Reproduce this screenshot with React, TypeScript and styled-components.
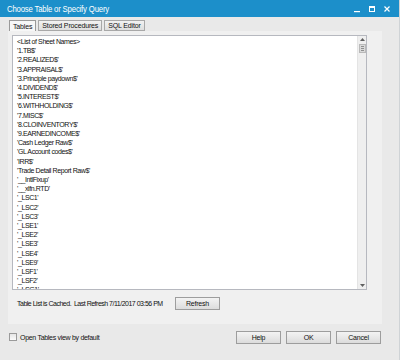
import React from 'react';
import styled, { createGlobalStyle } from 'styled-components';

const Global = createGlobalStyle`
  html, body { margin: 0; padding: 0; background: #e9e9e9; }
  body { font-family: "Liberation Sans", Arial, sans-serif; }
`;

const Window = styled.div`
  width: 400px;
  height: 360px;
  background: #e9e9e9;
  display: flex;
  flex-direction: column;
  overflow: hidden;
  box-sizing: border-box;
  border-right: 1px solid #cfd3d6;
`;

const TitleBar = styled.div`
  height: 17px;
  background: #1c8fca;
  color: #fff;
  display: flex;
  align-items: center;
  padding-left: 7px;
  font-size: 9px;
  flex-shrink: 0;
`;

const TitleWrap = styled.div`
  flex: 1;
`;

const Title = styled.span`
  display: inline-block;
  letter-spacing: -0.2px;
  transform: scaleX(0.86);
  transform-origin: left center;
  white-space: nowrap;
`;

const Controls = styled.div`
  display: flex;
  align-items: center;
  gap: 7px;
  padding-right: 8px;
`;

const CtrlBtn = styled.div`
  width: 8px;
  height: 8px;
  display: flex;
  align-items: center;
  justify-content: center;
`;

const Body = styled.div`
  padding: 3px 0 0 8px;
  display: flex;
  flex-direction: column;
`;

const TabRow = styled.div`
  display: flex;
  gap: 2px;
  padding-left: 1px;
  height: 11px;
`;

const Tab = styled.div<{ $active?: boolean }>`
  height: 11px;
  box-sizing: border-box;
  border: 1px solid ${p => (p.$active ? '#9a9a9a' : '#a8a8a8')};
  border-bottom: ${p => (p.$active ? 'none' : '1px solid #a8a8a8')};
  background: ${p => (p.$active ? '#f7f7f7' : 'linear-gradient(#f2f2f2, #dedede)')};
  font-size: 7px;
  letter-spacing: -0.15px;
  color: #111;
  padding: 0 3px;
  display: flex;
  align-items: center;
`;

const Panel = styled.div`
  width: 374px;
  height: 293px;
  background: #f0f0f0;
  box-sizing: border-box;
  padding: 4px 4px 0 4px;
  display: flex;
  flex-direction: column;
`;

const ListBox = styled.div`
  width: 355px;
  height: 255px;
  box-sizing: border-box;
  border: 1px solid #b6b8bf;
  background: #fff;
  display: flex;
`;

const Items = styled.div`
  flex: 1;
  overflow: hidden;
  padding: 1px 0 0 4px;
`;

const Item = styled.div`
  font-size: 7px;
  line-height: 9.2px;
  letter-spacing: -0.4px;
  color: #111;
  white-space: pre;
`;

const ScrollBar = styled.div`
  width: 9px;
  background: #efefef;
  border-left: 1px solid #e4e4e4;
  display: flex;
  flex-direction: column;
  align-items: center;
  padding: 2px 0;
  box-sizing: border-box;
`;

const Thumb = styled.div`
  width: 7px;
  height: 9px;
  margin-top: 3px;
  box-sizing: border-box;
  border: 1px solid #b9b9b9;
  background: #dadada;
  display: flex;
  flex-direction: column;
  justify-content: center;
  align-items: center;
  gap: 1px;
  span { width: 3px; height: 1px; background: #8f8f8f; display: block; }
`;

const Spacer = styled.div`
  flex: 1;
`;

const StatusRow = styled.div`
  display: flex;
  align-items: center;
  height: 14px;
  margin-top: 6px;
  padding-left: 5px;
`;

const StatusText = styled.span`
  font-size: 7px;
  letter-spacing: -0.5px;
  color: #111;
  width: 158px;
  white-space: nowrap;
`;

const Button = styled.div<{ $w?: number }>`
  width: ${p => p.$w ?? 45}px;
  height: 13px;
  box-sizing: border-box;
  border: 1px solid #9d9d9d;
  background: linear-gradient(#f3f3f3, #dcdcdc);
  font-size: 7px;
  letter-spacing: -0.2px;
  color: #111;
  display: flex;
  align-items: center;
  justify-content: center;
`;

const Footer = styled.div`
  display: flex;
  align-items: center;
  margin-top: 6px;
  padding-left: 1px;
  height: 14px;
`;

const CheckWrap = styled.label`
  display: flex;
  align-items: center;
  gap: 3px;
  font-size: 7px;
  letter-spacing: -0.3px;
  color: #111;
  flex: 1;
`;

const Box = styled.span`
  width: 8px;
  height: 8px;
  box-sizing: border-box;
  border: 1px solid #9a9a9a;
  background: linear-gradient(#e6e6e6, #fbfbfb);
  display: block;
`;

const Buttons = styled.div`
  display: flex;
  gap: 5px;
  padding-right: 18px;
`;

const items = [
  '<List of Sheet Names>',
  "'1.TB$'",
  "'2.REALIZED$'",
  "'3.APPRAISAL$'",
  "'3.Principle paydown$'",
  "'4.DIVIDEND$'",
  "'5.INTEREST$'",
  "'6.WITHHOLDING$'",
  "'7.MISC$'",
  "'8.CLOINVENTORY$'",
  "'9.EARNEDINCOME$'",
  "'Cash Ledger Raw$'",
  "'GL Account codes$'",
  "'IRR$'",
  "'Trade Detail Report Raw$'",
  "'__IntlFixup'",
  "'__xlfn.RTD'",
  "'_LSC1'",
  "'_LSC2'",
  "'_LSC3'",
  "'_LSE1'",
  "'_LSE2'",
  "'_LSE3'",
  "'_LSE4'",
  "'_LSE9'",
  "'_LSF1'",
  "'_LSF2'",
  "'_LSG1'",
];

export default function App() {
  return (
    <>
      <Global />
      <Window>
        <TitleBar>
          <TitleWrap>
            <Title>Choose Table or Specify Query</Title>
          </TitleWrap>
          <Controls>
            <CtrlBtn>
              <svg width="8" height="8" viewBox="0 0 8 8">
                <rect x="1" y="6" width="6" height="1.2" fill="#fff" />
              </svg>
            </CtrlBtn>
            <CtrlBtn>
              <svg width="8" height="8" viewBox="0 0 8 8">
                <rect x="1.5" y="1.5" width="5" height="5" fill="none" stroke="#fff" strokeWidth="1" />
                <rect x="1.5" y="1.5" width="5" height="1.5" fill="#fff" />
              </svg>
            </CtrlBtn>
            <CtrlBtn>
              <svg width="8" height="8" viewBox="0 0 8 8">
                <path d="M1.5 1.5 L6.5 6.5 M6.5 1.5 L1.5 6.5" stroke="#fff" strokeWidth="1.2" />
              </svg>
            </CtrlBtn>
          </Controls>
        </TitleBar>
        <Body>
          <TabRow>
            <Tab $active>Tables</Tab>
            <Tab>Stored Procedures</Tab>
            <Tab>SQL Editor</Tab>
          </TabRow>
          <Panel>
            <ListBox>
              <Items>
                {items.map(t => (
                  <Item key={t}>{t}</Item>
                ))}
              </Items>
              <ScrollBar>
                <svg width="5" height="3" viewBox="0 0 5 3">
                  <path d="M0 3 L2.5 0 L5 3 Z" fill="#606060" />
                </svg>
                <Thumb>
                  <span />
                  <span />
                  <span />
                </Thumb>
                <Spacer />
                <svg width="5" height="3" viewBox="0 0 5 3">
                  <path d="M0 0 L2.5 3 L5 0 Z" fill="#606060" />
                </svg>
              </ScrollBar>
            </ListBox>
            <StatusRow>
              <StatusText>Table List is Cached.&nbsp; Last Refresh 7/11/2017 03:56 PM</StatusText>
              <Button>Refresh</Button>
            </StatusRow>
          </Panel>
          <Footer>
            <CheckWrap>
              <Box />
              Open Tables view by default
            </CheckWrap>
            <Buttons>
              <Button>Help</Button>
              <Button>OK</Button>
              <Button>Cancel</Button>
            </Buttons>
          </Footer>
        </Body>
      </Window>
    </>
  );
}
